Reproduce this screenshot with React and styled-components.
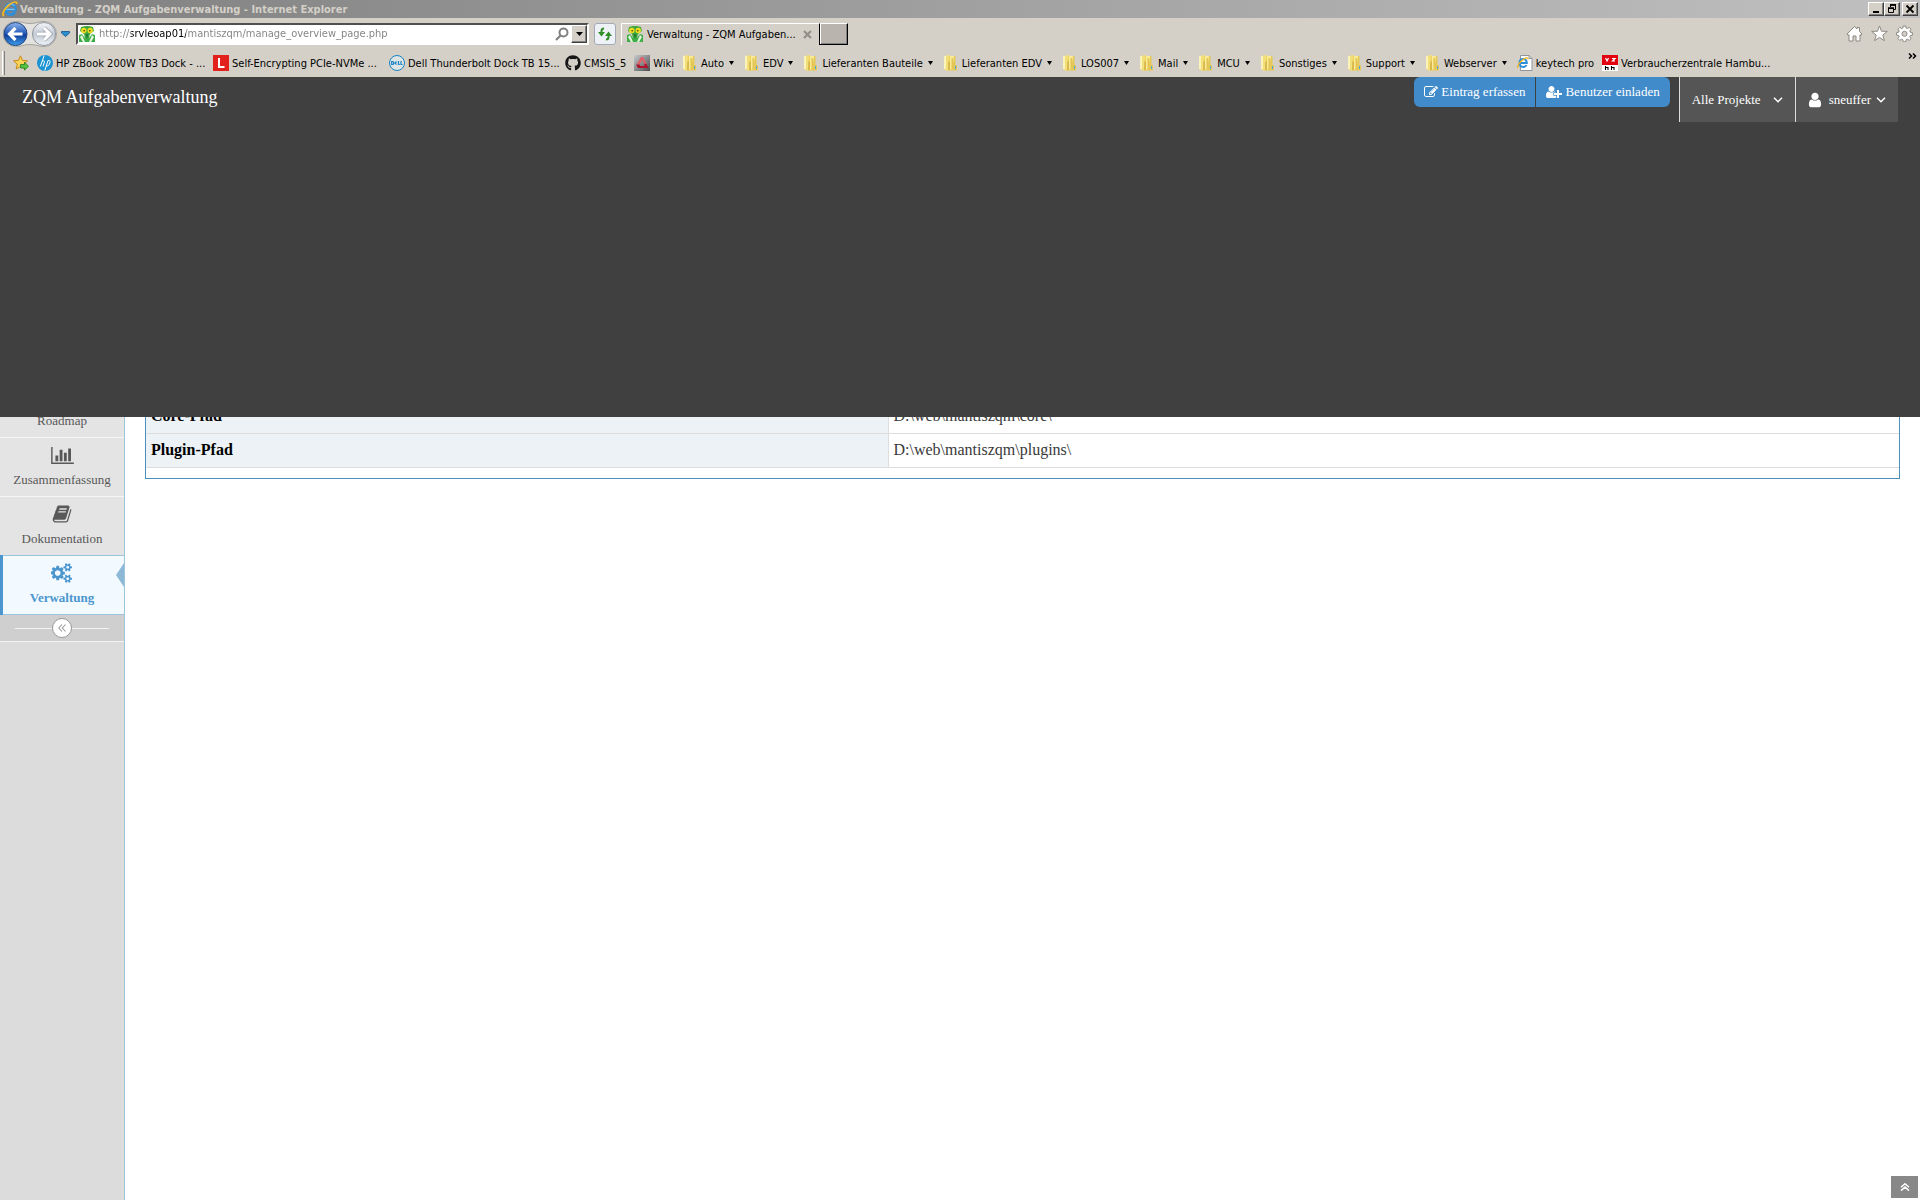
import React, { useState } from 'react'
import styled, { createGlobalStyle, css } from 'styled-components'
import { FaGithub } from 'react-icons/fa'

const GlobalStyle = createGlobalStyle`
  * { box-sizing: border-box; }
  body { margin: 0; background: #fff; }
  button, input { font: inherit; margin: 0; padding: 0; border: 0; background: none; color: inherit; }
  a { color: inherit; text-decoration: none; }
  svg { display: block; flex: none; }
`

/* ---------- browser icons ---------- */

const IeIcon = () => (
  <svg width="16" height="16" viewBox="0 0 16 16" fill="none">
    <path d="M3.500 8.800h10c.2-3.600-1.900-5.800-4.900-5.800S3.600 5.400 3.600 8.400s2 5.200 5 5.200c2.200 0 3.700-1 4.400-2.800" stroke="#2b8fdc" strokeWidth="2.800" />
    <path d="M4.500 5.500c1-1.800 2.400-2.600 4.200-2.600 1.600 0 2.800.6 3.600 1.800M4.500 8.300h8" stroke="#8fd2fa" strokeWidth="1" />
    <path d="M1.800 15.200C-.8 12.800 3.300 6.500 8 3.200c3.600-2.600 7.100-3.200 6.800-.2" stroke="#f5b91f" strokeWidth="1.700" />
  </svg>
)

const MantisIcon = () => (
  <svg width="16" height="16" viewBox="0 0 16 16">
    <path d="M0 9l3-1 3 4h4l3-4 3 1v7H0z" fill="#3fae49" />
    <path d="M3 9l3 7H4L1 11zM13 9l-3 7h2l3-5z" fill="#e4f5de" />
    <path d="M2 1l4-1h4l4 1 1 4-4 3-1 4H6L5 8 1 5z" fill="#43a83c" />
    <circle cx="4.800" cy="4.500" r="2.700" fill="#efdc22" />
    <circle cx="11.200" cy="4.500" r="2.700" fill="#efdc22" />
    <circle cx="5.200" cy="4.700" r=".8" fill="#473a08" />
    <circle cx="10.800" cy="4.700" r=".8" fill="#473a08" />
    <path d="M6.500 8h3L8 13z" fill="#1e7a38" />
  </svg>
)

const TravelIcon = () => (
  <svg width="54" height="26" viewBox="0 0 54 26">
    <defs>
      <linearGradient id="back" x1="0" y1="0" x2="0" y2="1">
        <stop offset="0" stopColor="#8fb4ea" />
        <stop offset=".45" stopColor="#2a5fbd" />
        <stop offset=".55" stopColor="#0f3f9c" />
        <stop offset="1" stopColor="#3fa0ee" />
      </linearGradient>
      <linearGradient id="forward" x1="0" y1="0" x2="0" y2="1">
        <stop offset="0" stopColor="#f4f6f9" />
        <stop offset=".5" stopColor="#c3cad4" />
        <stop offset="1" stopColor="#eef3f8" />
      </linearGradient>
    </defs>
    <path d="M12.500.5c7 0 8 2 14.500 2S34.500.5 41 .5a12.500 12.500 0 0 1 0 25c-6.500 0-7.500-2-14-2s-7.500 2-14.500 2a12.500 12.500 0 0 1 0-25z" fill="#e4e2de" stroke="#a5a39e" />
    <circle cx="12.500" cy="13" r="11.500" fill="url(#back)" stroke="#23477f" />
    <circle cx="41" cy="13" r="11.500" fill="url(#forward)" stroke="#8e959f" />
    <path d="M19.500 13H7.500M12.500 7l-6 6 6 6" stroke="#fff" strokeWidth="3.200" fill="none" />
    <path d="M34 13h12M41 7l6 6-6 6" stroke="#9aa1ab" strokeWidth="4.500" fill="none" />
    <path d="M34 13h12M41 7l6 6-6 6" stroke="#fff" strokeWidth="3" fill="none" />
  </svg>
)

const RecentIcon = () => (
  <svg width="9" height="6" viewBox="0 0 9 6"><path d="M.5.500h8v1.500l-4 3.500-4-3.500z" fill="#2c8fd0" stroke="#154f86" strokeWidth=".8" /></svg>
)

const SearchIcon = () => (
  <svg width="14" height="14" viewBox="0 0 14 14" fill="none" stroke="#808080">
    <circle cx="8.500" cy="5.500" r="4" strokeWidth="2" />
    <path d="M5.500 8.500L1 13" strokeWidth="2.200" />
  </svg>
)

const RefreshIcon = () => (
  <svg width="16" height="16" viewBox="0 0 16 16" fill="none">
    <path d="M7 2.500c-2 0-2.500.8-2.500 2.500v2M9 13.500c2 0 2.500-.8 2.500-2.500V9" stroke="#2f8f26" strokeWidth="2" />
    <path d="M1 6h7l-3.500 4.500zM8 10h7l-3.500-4.500z" fill="#2f8f26" />
  </svg>
)

const ArrowIcon = ({ w = 5 }) => (
  <svg width={w} height="4" viewBox="0 0 5 3" preserveAspectRatio="none"><path d="M0 0h5L2.500 3z" fill="#000" /></svg>
)

const FolderIcon = () => (
  <svg width="16" height="16" viewBox="0 0 16 16">
    <path d="M1 1l6-1v15l-3 1-3-2z" fill="#f3df7a" />
    <path d="M1 1h2v13l-2 0z" fill="#fbf3b8" />
    <path d="M6 1h6v11l-4 4-3-1z" fill="#ecd361" />
    <path d="M5.500 7L6.500 6v9l-1 .5z" fill="#c79f38" />
    <path d="M7 1l4 0v10l-4 4z" fill="#f9eb98" />
    <path d="M8.500 3h1.500v10l-1.500 1.500z" fill="#e3c455" />
    <path d="M11 1h1.500v9H14v5.500H9z" fill="#e6c857" />
    <path d="M12 11h1v3h-1z" fill="#4aa3e0" />
  </svg>
)

const FavStarIcon = () => (
  <svg width="16" height="16" viewBox="0 0 16 16">
    <path d="M7.500.800l2 4.600 5 .4-3.800 3.300 1.200 4.900-4.400-2.600L3.100 14l1.200-4.900L.5 5.800l5-.4z" fill="#fbd45a" stroke="#c98a12" />
    <path d="M7.500 9.500h4v-2.300l4 4-4 4v-2.200h-4z" fill="#55c242" stroke="#21801a" strokeWidth=".8" />
  </svg>
)

const HpIcon = () => (
  <svg width="16" height="16" viewBox="0 0 16 16" fill="none">
    <circle cx="8" cy="8" r="8" fill="#1b93d2" />
    <path d="M7.200.5L3.300 11.500M5.200 6c1.900-.6 2.600 0 2.200 1.200L6 11.500M11 5.500L7.800 15.500M11 5.500c1.900-.1 2.400.5 2 1.800l-.7 2c-.4 1.200-1.200 1.600-3 1.600" stroke="#fff" strokeWidth="1" />
  </svg>
)

const LIcon = () => (
  <svg width="16" height="16" viewBox="0 0 16 16"><path d="M0 0h16v16H0z" fill="#e2211c" /><path d="M6 3v9h5.500" stroke="#fff" strokeWidth="2" fill="none" /></svg>
)

const DellIcon = () => (
  <svg width="16" height="16" viewBox="0 0 16 16" fill="none" stroke="#1583c6">
    <circle cx="8" cy="8" r="7.500" fill="#dfe4e4" />
    <path d="M2.700 6.500v3h.8c1.600 0 1.600-3 0-3zM7.500 6.500L6 8l1.500 1.500M9.500 6v3.500h1.300M12 6v3.500h1.500" strokeWidth="1.200" />
  </svg>
)

const WikiIcon = () => (
  <svg width="16" height="16" viewBox="0 0 16 16">
    <defs>
      <linearGradient id="wiki" x1="0" y1="0" x2="1" y2="1">
        <stop offset="0" stopColor="#c9cacc" />
        <stop offset="1" stopColor="#4b4c50" />
      </linearGradient>
    </defs>
    <path d="M0 0h16v16H0z" fill="url(#wiki)" />
    <path d="M7 2h2l4 7-2 1-3-5-2 4H3z" fill="#e06068" />
    <path d="M2 9.500h3.500l1 1.500H11l-1-2 2-.5 2.500 4.500H4z" fill="#b3122c" />
  </svg>
)

const PageIcon = () => (
  <svg width="16" height="16" viewBox="0 0 16 16" fill="none">
    <path d="M3.500.5h8.500l3 3v12H3.500z" fill="#fff" stroke="#8f959c" />
    <path d="M12 .5v3h3" stroke="#8f959c" />
    <path d="M2.500 8h7.300c0-2.500-1.500-3.900-3.600-3.900S2.500 5.700 2.500 8.100s1.500 3.900 3.700 3.900c1.600 0 2.700-.7 3.200-2" stroke="#2b8fdc" strokeWidth="2" />
    <path d="M1.200 13c-1.500-1.500 1.300-5.800 4.300-8.100s5.800-2.900 5.500-.6" stroke="#f2b41c" strokeWidth="1.300" />
  </svg>
)

const VzIcon = () => (
  <svg width="16" height="16" viewBox="0 0 16 16" fill="none">
    <path d="M0 0h16v10H0z" fill="#e3000f" />
    <path d="M0 10h16v6H0z" fill="#fff" />
    <path d="M3.500 3L5 6l1.500-3M10 3.500h3L10.500 6H13" stroke="#fff" strokeWidth="1.200" />
    <path d="M3.500 11v4M3.500 12.500H6V15M9.500 11v4M9.500 12.500H12V15" stroke="#000" strokeWidth="1.100" />
  </svg>
)

const HomeIcon = () => (
  <svg width="17" height="17" viewBox="0 0 17 17"><path d="M8.500 1.500l2.500 2.500V2.500h2.500V6.500l2.500 2.500-1 1.500-1-.8v6.300h-4v-5h-3v5H3V9.700l-1 .8L1 9z" fill="#fff" stroke="#8c8983" strokeLinejoin="round" /></svg>
)

const StarIcon = () => (
  <svg width="17" height="17" viewBox="0 0 17 17"><path d="M8.500 1l2 5.200 5.800.2-4.500 3.600 1.600 5.700-4.900-3.300-4.900 3.300L5.200 10 .7 6.400l5.800-.2z" fill="#fff" stroke="#8c8983" strokeLinejoin="round" /></svg>
)

const GearIcon = () => (
  <svg width="17" height="17" viewBox="0 0 17 17">
    <path d="M7.200 1h2.600l.4 2.100 1.200.5 1.800-1.200 1.800 1.800-1.200 1.800.5 1.200 2.100.4v2.600l-2.100.4-.5 1.200 1.200 1.800-1.800 1.800-1.800-1.200-1.200.5-.4 2.100H7.200l-.4-2.100-1.200-.5-1.800 1.200L2 13.600l1.200-1.800-.5-1.200L.6 10.200V7.600l2.100-.4.5-1.200L2 4.200l1.800-1.800 1.800 1.200 1.200-.5z" fill="#fff" stroke="#8c8983" />
    <circle cx="8.500" cy="8.800" r="2.500" fill="#d4d0c8" stroke="#8c8983" />
  </svg>
)

const MoreIcon = () => (
  <svg width="9" height="6" viewBox="0 0 9 6" fill="none" stroke="#000" strokeWidth="1.500"><path d="M1 .5L3.500 3 1 5.500M5 .5L7.500 3 5 5.500" /></svg>
)

const MinimizeIcon = () => <svg width="10" height="10" viewBox="0 0 10 10"><path d="M2 7h6v2H2z" /></svg>
const RestoreIcon = () => (
  <svg width="10" height="10" viewBox="0 0 10 10" fill="none" stroke="#000"><path d="M3.500 3V.5h5v5H6.500M1.500 4v4.500h5V4M3 1h6M1 4.500h6" /><path d="M1 4h6M3 1h6" strokeWidth="1.500" /></svg>
)
const CloseIcon = () => <svg width="10" height="10" viewBox="0 0 10 10"><path d="M1.500 1.500l7 7M8.500 1.500l-7 7" stroke="#000" strokeWidth="1.800" /></svg>
const TabCloseIcon = () => <svg width="9" height="9" viewBox="0 0 9 9"><path d="M1 1l7 7M8 1L1 8" stroke="#928f88" strokeWidth="2.200" /></svg>

/* ---------- page icons ---------- */

const EditIcon = () => (
  <svg width="14" height="14" viewBox="0 0 1792 1792" fill="currentColor">
    <path d="M888 1184l116-116-152-152-116 116v56h96v96h56zm440-720q-16-16-33 1l-350 350q-17 17-1 33t33-1l350-350q17-17 1-33zm80 594v190q0 119-84.500 203.500t-203.500 84.500h-832q-119 0-203.500-84.500t-84.500-203.500v-832q0-119 84.500-203.500t203.500-84.500h832q63 0 117 25 15 7 18 23 3 17-9 29l-49 49q-14 14-32 8-23-6-45-6h-832q-66 0-113 47t-47 113v832q0 66 47 113t113 47h832q66 0 113-47t47-113v-126q0-13 9-22l64-64q15-15 35-7t20 29zm-96-738l288 288-672 672h-288v-288zm444 132l-92 92-288-288 92-92q28-28 68-28t68 28l152 152q28 28 28 68t-28 68z" />
  </svg>
)

const UserPlusIcon = () => (
  <svg width="16" height="14" viewBox="0 0 2048 1792" fill="currentColor">
    <path d="M704 896q-159 0-271.500-112.500t-112.500-271.500 112.500-271.500 271.500-112.500 271.500 112.500 112.500 271.500-112.500 271.500-271.500 112.500zm960 128h352q13 0 22.500 9.500t9.500 22.500v192q0 13-9.500 22.500t-22.500 9.500h-352v352q0 13-9.500 22.500t-22.500 9.500h-192q-13 0-22.500-9.500t-9.500-22.500v-352h-352q-13 0-22.500-9.500t-9.500-22.500v-192q0-13 9.500-22.500t22.500-9.500h352v-352q0-13 9.500-22.500t22.500-9.500h192q13 0 22.500 9.500t9.500 22.500v352zm-736 224q0 52 38 90t90 38h256v238q-68 50-171 50h-874q-121 0-194-69t-73-190q0-53 3.500-103.500t14-109 26.500-108.500 43-97.500 62-81 85.500-53.500 111.500-20q19 0 39 17 79 61 154.500 91.500t164.500 30.500 164.500-30.500 154.500-91.500q20-17 39-17 132 0 217 96h-223q-52 0-90 38t-38 90v192z" />
  </svg>
)

const UserIcon = () => (
  <svg width="14" height="18" viewBox="160 0 1472 1792" fill="currentColor">
    <path d="M1536 1399q0 109-62.500 187t-150.500 78h-854q-88 0-150.500-78t-62.500-187q0-85 8.500-160.500t31.500-152 58.500-131 94-89 134.500-34.500q131 128 313 128t313-128q76 0 134.500 34.500t94 89 58.500 131 31.500 152 8.500 160.500zm-256-887q0 159-112.500 271.500t-271.500 112.500-271.500-112.500-112.500-271.500 112.500-271.500 271.500-112.500 271.500 112.500 112.500 271.500z" />
  </svg>
)

const ChartIcon = () => (
  <svg width="23" height="17" viewBox="0 0 2048 1536" fill="currentColor">
    <path d="M640 768v512H384V768h256zm384-512v1024H768V256h256zm1024 1152v128H0V0h128v1408h1920zm-640-896v768h-256V512h256zm384-384v1152h-256V128h256z" />
  </svg>
)

const BookIcon = () => (
  <svg width="20" height="20" viewBox="0 0 1792 1792" fill="currentColor">
    <path d="M1703 478q40 57 18 129l-275 906q-19 64-76.500 107.500t-122.500 43.500h-923q-77 0-148.500-53.500t-99.500-131.500q-24-67-2-127 0-4 3-27t4-37q1-8-3-21.500t-3-19.500q2-11 8-21t16.500-23.500 16.500-23.500q23-38 45-91.500t30-91.500q3-10 .5-30t-.5-28q3-11 17-28t17-23q21-36 42-92t25-90q1-9-2.500-32t.5-28q4-13 22-30.500t22-22.500q19-26 42.500-84.500t27.500-96.500q1-8-3-25.500t-2-26.500q2-8 9-18t18-23 17-21q8-12 16.500-30.500t15-35 16-36 19.500-32 26.500-23.500 36-11.500 47.500 5.500l-1 3q38-9 51-9h761q74 0 114 56t18 130l-274 906q-36 119-71.500 153.500t-128.500 34.500h-869q-27 0-38 15-11 16-1 43 24 70 144 70h923q29 0 56-15.500t35-41.500l300-987q7-22 5-57 38 15 59 43zm-1064 2q-4 13 2 22.500t20 9.500h608q13 0 25.500-9.500t16.500-22.500l21-64q4-13-2-22.500t-20-9.500h-608q-13 0-25.500 9.500t-16.500 22.500zm-83 256q-4 13 2 22.500t20 9.500h608q13 0 25.500-9.500t16.500-22.500l21-64q4-13-2-22.500t-20-9.500h-608q-13 0-25.500 9.500t-16.500 22.500z" />
  </svg>
)

const CogsIcon = () => (
  <svg width="22" height="20" viewBox="0 0 1920 1792" fill="currentColor">
    <path d="M832 896q0-106-75-181t-181-75-181 75-75 181 75 181 181 75 181-75 75-181zm768 512q0-52-38-90t-90-38-90 38-38 90q0 53 37.500 90.500t90.500 37.500 90.500-37.500 37.500-90.500zm0-1024q0-52-38-90t-90-38-90 38-38 90q0 53 37.500 90.500t90.500 37.500 90.500-37.500 37.500-90.500zm-384 421v185q0 10-7 19.500t-16 10.500l-155 24q-11 35-32 76 34 48 90 115 7 11 7 20 0 12-7 19-23 30-82.500 89.500t-78.500 59.500q-11 0-21-7l-115-90q-37 19-77 31-11 108-23 155-7 24-30 24h-186q-11 0-20-7.500t-10-17.500l-23-153q-34-10-75-31l-118 89q-7 7-20 7-11 0-21-8-144-133-144-160 0-9 7-19 10-14 41-53t47-61q-23-44-35-82l-152-24q-10-1-17-9.500t-7-19.500v-185q0-10 7-19.500t16-10.500l155-24q11-35 32-76-34-48-90-115-7-11-7-20 0-12 7-20 22-30 82-89t79-59q11 0 21 7l115 90q34-18 77-32 11-108 23-154 7-24 30-24h186q11 0 20 7.500t10 17.500l23 153q34 10 75 31l118-89q8-7 20-7 11 0 21 8 144 133 144 160 0 8-7 19-12 16-42 54t-45 60q23 48 34 82l152 23q10 2 17 10.500t7 19.500zm640 533v140q0 16-149 31-12 27-30 52 51 113 51 138 0 4-4 7-122 71-124 71-8 0-46-47t-52-68q-20 2-30 2t-30-2q-14 21-52 68t-46 47q-2 0-124-71-4-3-4-7 0-25 51-138-18-25-30-52-149-15-149-31v-140q0-16 149-31 13-29 30-52-51-113-51-138 0-4 4-7 4-2 35-20t59-34 30-16q8 0 46 46.500t52 67.500q20-2 30-2t30 2q51-71 92-112l6-2q4 0 124 70 4 3 4 7 0 25-51 138 17 23 30 52 149 15 149 31zm0-1024v140q0 16-149 31-12 27-30 52 51 113 51 138 0 4-4 7-122 71-124 71-8 0-46-47t-52-68q-20 2-30 2t-30-2q-14 21-52 68t-46 47q-2 0-124-71-4-3-4-7 0-25 51-138-18-25-30-52-149-15-149-31v-140q0-16 149-31 13-29 30-52-51-113-51-138 0-4 4-7 4-2 35-20t59-34 30-16q8 0 46 46.500t52 67.500q20-2 30-2t30 2q51-71 92-112l6-2q4 0 124 70 4 3 4 7 0 25-51 138 17 23 30 52 149 15 149 31z" />
  </svg>
)

const ChevronIcon = () => (
  <svg width="10" height="6" viewBox="0 0 10 6"><path d="M1 .7l4 4 4-4" fill="none" stroke="currentColor" strokeWidth="1.500" /></svg>
)

const DoubleLeftIcon = () => (
  <svg width="8" height="8" viewBox="0 0 8 8"><path d="M4 .5L.8 4 4 7.500M7.500.5L4.300 4l3.200 3.500" fill="none" stroke="#999" strokeWidth="1.100" /></svg>
)

const DoubleUpIcon = () => (
  <svg width="10" height="8" viewBox="0 0 10 8"><path d="M1 4.300l4-3.500 4 3.500M1 7.600l4-3.500 4 3.500" fill="none" stroke="#fff" strokeWidth="1.500" /></svg>
)

/* ---------- data ---------- */

const bookmarks = [
  { label: 'HP ZBook 200W TB3 Dock - ...', icon: <HpIcon />, wide: true },
  { label: 'Self-Encrypting PCIe-NVMe ...', icon: <LIcon />, wide: true },
  { label: 'Dell Thunderbolt Dock TB 15...', icon: <DellIcon />, wide: true },
  { label: 'CMSIS_5', icon: <FaGithub size={16} color="#161616" /> },
  { label: 'Wiki', icon: <WikiIcon /> },
  { label: 'Auto', folder: true },
  { label: 'EDV', folder: true },
  { label: 'Lieferanten Bauteile', folder: true },
  { label: 'Lieferanten EDV', folder: true },
  { label: 'LOS007', folder: true },
  { label: 'Mail', folder: true },
  { label: 'MCU', folder: true },
  { label: 'Sonstiges', folder: true },
  { label: 'Support', folder: true },
  { label: 'Webserver', folder: true },
  { label: 'keytech pro', icon: <PageIcon /> },
  { label: 'Verbraucherzentrale Hambu...', icon: <VzIcon />, wide: true },
]

const menu = [
  { label: 'Roadmap' },
  { label: 'Zusammenfassung', icon: <ChartIcon /> },
  { label: 'Dokumentation', icon: <BookIcon /> },
  { label: 'Verwaltung', icon: <CogsIcon />, active: true },
]

const paths = [
  ['Core-Pfad', 'D:\\web\\mantiszqm\\core\\'],
  ['Plugin-Pfad', 'D:\\web\\mantiszqm\\plugins\\'],
]

const App = () => {
  const [url, setUrl] = useState('http://srvleoap01/mantiszqm/manage_overview_page.php')
  return (
    <Page>
      <GlobalStyle />
      <Browser>
        <TitleBar>
          <IeIcon />
          <WindowTitle>Verwaltung - ZQM Aufgabenverwaltung - Internet Explorer</WindowTitle>
          <WindowButton aria-label="Minimieren"><MinimizeIcon /></WindowButton>
          <WindowButton aria-label="Wiederherstellen"><RestoreIcon /></WindowButton>
          <WindowButton aria-label="Schließen" $apart><CloseIcon /></WindowButton>
        </TitleBar>
        <NavRow>
          <Travel aria-label="Zurück und Vorwärts"><TravelIcon /></Travel>
          <Recent aria-label="Zuletzt besucht"><RecentIcon /></Recent>
          <AddressBar>
            <MantisIcon />
            <AddressInput aria-label="Adresse" value={url} onChange={(e) => setUrl(e.target.value)} />
            <IconButton aria-label="Suchen"><SearchIcon /></IconButton>
            <AddressDrop aria-label="Verlauf"><ArrowIcon w={7} /></AddressDrop>
          </AddressBar>
          <Refresh aria-label="Aktualisieren"><RefreshIcon /></Refresh>
          <Tab>
            <MantisIcon />
            <TabTitle>Verwaltung - ZQM Aufgaben...</TabTitle>
            <IconButton aria-label="Registerkarte schließen"><TabCloseIcon /></IconButton>
          </Tab>
          <NewTab aria-label="Neue Registerkarte" />
          <Tools>
            <IconButton aria-label="Startseite"><HomeIcon /></IconButton>
            <IconButton aria-label="Favoriten"><StarIcon /></IconButton>
            <IconButton aria-label="Extras"><GearIcon /></IconButton>
          </Tools>
        </NavRow>
        <FavoritesBar>
          <Grip />
          <IconButton aria-label="Zu Favoriten hinzufügen"><FavStarIcon /></IconButton>
          <Favorites>
            {bookmarks.map(({ label, icon, folder, wide }) => (
              <li key={label}>
                {folder ? (
                  <Favorite as="button"><FolderIcon />{label}<Drop><ArrowIcon /></Drop></Favorite>
                ) : (
                  <Favorite href="#" $wide={wide}>{icon}{label}</Favorite>
                )}
              </li>
            ))}
          </Favorites>
          <More aria-label="Weitere Favoriten"><MoreIcon /></More>
        </FavoritesBar>
      </Browser>

      <Navbar>
        <Brand href="#">ZQM Aufgabenverwaltung</Brand>
        <Actions>
          <ActionButton><EditIcon />Eintrag erfassen</ActionButton>
          <ActionButton><UserPlusIcon />Benutzer einladen</ActionButton>
        </Actions>
        <NavButton $gap="12px">Alle Projekte<ChevronIcon /></NavButton>
        <NavButton $gap="5px"><UserBadge><UserIcon /></UserBadge>sneuffer<ChevronIcon /></NavButton>
      </Navbar>

      <Body>
        <Sidebar>
          {menu.map(({ label, icon, active }) => (
            <MenuItem key={label} href="#" $active={active}>
              <MenuIcon>{icon}</MenuIcon>
              {label}
            </MenuItem>
          ))}
          <Collapse>
            <CollapseButton aria-label="Menü einklappen"><DoubleLeftIcon /></CollapseButton>
          </Collapse>
        </Sidebar>
        <Main>
          <Widget>
            <PathTable>
              <tbody>
                {paths.map(([name, value]) => (
                  <tr key={name}>
                    <th scope="row">{name}</th>
                    <td>{value}</td>
                  </tr>
                ))}
              </tbody>
            </PathTable>
          </Widget>
        </Main>
      </Body>
      <ScrollUp aria-label="Nach oben"><DoubleUpIcon /></ScrollUp>
    </Page>
  )
}

const Page = styled.div`
  display: flex;
  flex-direction: column;
  min-height: 100vh;
  font-family: 'Liberation Serif', serif;
`

const Browser = styled.div`
  background: #d4d0c8;
  color: #000;
  font: 11px 'DejaVu Sans Condensed', 'DejaVu Sans', sans-serif;
`

const TitleBar = styled.div`
  display: flex;
  align-items: center;
  height: 18px;
  padding: 0 2px;
  background: linear-gradient(90deg, #808080, #c0c0c0);
`

const WindowTitle = styled.span`
  flex: 1;
  padding-left: 2px;
  color: #d4d0c8;
  font-weight: bold;
  white-space: nowrap;
`

const bevel = css`
  border: 1px solid;
  border-color: #fff #404040 #404040 #fff;
  box-shadow: inset -1px -1px #808080;
`

const WindowButton = styled.button`
  ${bevel}
  display: flex;
  align-items: center;
  justify-content: center;
  width: 16px;
  height: 14px;
  margin-left: ${({ $apart }) => ($apart ? '2px' : '0')};
  background: #d4d0c8;
`

const NavRow = styled.div`
  display: flex;
  align-items: center;
  height: 31px;
  padding: 0 7px 0 3px;
`

const IconButton = styled.button`
  display: flex;
  align-items: center;
`

const Travel = styled(IconButton)`
  height: 28px;
`

const Recent = styled(IconButton)`
  margin: 0 6px 0 4px;
`

const AddressBar = styled.div`
  display: flex;
  align-items: center;
  width: 513px;
  height: 22px;
  padding-left: 1px;
  background: #fff;
  border: 2px solid;
  border-color: #505050 #fff #fff #505050;
`

/* host part is darker than the rest of the address */
const AddressInput = styled.input`
  flex: 1;
  min-width: 0;
  height: 18px;
  margin-left: 4px;
  outline: 0;
  color: transparent;
  caret-color: #000;
  background: linear-gradient(90deg, #808080 32px, #000 32px, #000 87px, #808080 87px);
  -webkit-background-clip: text;
  background-clip: text;
`

const AddressDrop = styled.button`
  ${bevel}
  display: flex;
  align-items: center;
  justify-content: center;
  width: 16px;
  height: 18px;
  margin-left: 2px;
  background: #d4d0c8;
`

const Refresh = styled.button`
  display: flex;
  align-items: center;
  justify-content: center;
  width: 22px;
  height: 22px;
  margin: 0 5px;
  background: #eef1f6;
  border: 1px solid #a3abb8;
  border-radius: 3px;
`

const Tab = styled.div`
  display: flex;
  align-items: center;
  width: 198px;
  height: 22px;
  padding: 0 7px 0 5px;
  border: solid #fff;
  border-width: 1px 0 0 1px;
`

const TabTitle = styled.span`
  flex: 1;
  padding-left: 4px;
  white-space: nowrap;
`

const NewTab = styled.button`
  width: 29px;
  height: 22px;
  background: #b9b5ae;
  border: 1px solid #000;
  border-top-color: #fff;
  box-shadow: inset 1px 0 #fff, inset -1px -1px #808080;
`

const Tools = styled.div`
  display: flex;
  gap: 8px;
  margin-left: auto;
`

const FavoritesBar = styled.div`
  display: flex;
  align-items: center;
  height: 28px;
  padding: 0 3px 0 2px;
`

const Grip = styled.span`
  width: 3px;
  height: 24px;
  margin-right: 8px;
  border-left: 1px solid #fff;
  border-right: 1px solid #808080;
`

const Favorites = styled.ul`
  display: flex;
  flex: 1;
  gap: 8px;
  margin: 0 0 0 8px;
  padding: 0;
  list-style: none;
`

const Favorite = styled.a`
  display: flex;
  align-items: center;
  gap: 3px;
  width: ${({ $wide }) => ($wide ? '168px' : 'auto')};
  white-space: nowrap;
`

const Drop = styled.span`
  padding: 0 2px;
`

const More = styled(IconButton)`
  align-self: flex-start;
  height: 14px;
`

const Navbar = styled.header`
  position: relative;
  z-index: 1;
  display: flex;
  align-items: flex-start;
  height: 340px;
  padding: 0 22px;
  background: #404040;
  color: #fff;
  font-size: 13px;
`

const Brand = styled.a`
  margin-right: auto;
  font-size: 18px;
  line-height: 40px;
`

const Actions = styled.div`
  display: flex;
  gap: 1px;
  margin-right: 9px;
`

const ActionButton = styled.button`
  display: flex;
  align-items: center;
  gap: 3px;
  height: 30px;
  padding: 0 10px 1px;
  background: #428bca;
  &:first-child {
    border-radius: 6px 0 0 6px;
  }
  &:last-child {
    border-radius: 0 6px 6px 0;
  }
`

const NavButton = styled.button`
  display: flex;
  align-items: center;
  gap: ${({ $gap }) => $gap};
  height: 45px;
  padding: 0 12px;
  background: #555;
  border-left: 1px solid #ddd;
`

const UserBadge = styled.span`
  margin-right: 2px;
`

/* the navbar covers the top of the page body */
const Body = styled.div`
  display: flex;
  flex: 1;
  margin-top: -38px;
`

const Sidebar = styled.nav`
  width: 125px;
  background: #dcdcdc;
  border-right: 1px solid #9cc4dd;
`

const MenuItem = styled.a`
  position: relative;
  display: flex;
  flex-direction: column;
  align-items: center;
  height: 59px;
  padding-top: 8px;
  background: #e4e4e4;
  border-bottom: 1px solid #f6f6f6;
  color: #585858;
  font-size: 13px;
  line-height: 17px;
  ${({ $active }) => $active && css`
    height: 60px;
    margin-top: -1px;
    background: #f2f9ff;
    border: solid #9cc4dd;
    border-width: 1px 0;
    color: #4b96ce;
    font-weight: bold;
    &::before {
      content: '';
      position: absolute;
      top: -1px;
      bottom: -1px;
      left: 0;
      width: 3px;
      background: #4b96ce;
    }
    &::after {
      content: '';
      position: absolute;
      top: 7px;
      right: 0;
      border: solid transparent;
      border-width: 12px 8px 12px 0;
      border-right-color: #8eb9d6;
    }
  `}
`

const MenuIcon = styled.span`
  display: flex;
  align-items: center;
  height: 18px;
  margin-bottom: 7px;
`

const Collapse = styled.div`
  display: flex;
  align-items: center;
  height: 27px;
  padding: 0 15px;
  background: #cfcfcf;
  border-bottom: 1px solid #f2f2f2;
  &::before,
  &::after {
    content: '';
    flex: 1;
    height: 1px;
    background: #f2f2f2;
  }
`

const CollapseButton = styled.button`
  display: flex;
  align-items: center;
  justify-content: center;
  width: 20px;
  height: 20px;
  background: #fff;
  border: 1px solid #999;
  border-radius: 50%;
`

const Main = styled.main`
  flex: 1;
  padding: 21px 20px;
`

const Widget = styled.section`
  padding-bottom: 10px;
  border: solid #4c8fbd;
  border-width: 0 1px 1px;
`

const PathTable = styled.table`
  width: 100%;
  border-collapse: separate;
  border-spacing: 0;
  color: #393939;
  font-size: 16px;
  th,
  td {
    height: 34px;
    padding: 0 5px 2px;
    border-bottom: 1px solid #ddd;
    text-align: left;
  }
  th {
    width: 42.3%;
    background: #ecf2f5;
    color: #000;
  }
  td {
    border-left: 1px solid #ddd;
  }
`

const ScrollUp = styled.button`
  position: fixed;
  right: 2px;
  bottom: 2px;
  display: flex;
  align-items: center;
  justify-content: center;
  width: 27px;
  height: 22px;
  background: #888;
`

export default App
